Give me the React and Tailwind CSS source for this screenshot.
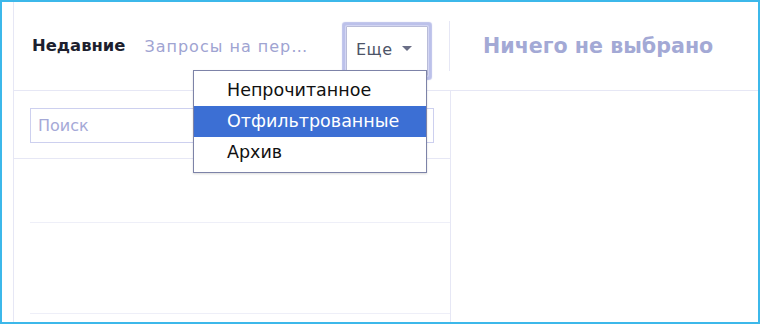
import { useState } from 'react';

const ITEMS = ['Непрочитанное', 'Отфильтрованные', 'Архив'];

export default function App() {
  const [active, setActive] = useState(1);

  return (
    <div className="w-[760px] h-[324px] border-2 border-[#3cb8ea] bg-white flex flex-col overflow-hidden font-['DejaVu_Sans',sans-serif]">
      <div className="flex-1 ml-[11px] border-l border-[#e6e7f5] flex flex-col">
        {/* Header */}
        <div className="h-[89px] border-b border-[#e6e7f5] flex items-center">
          <div className="w-[435px] self-stretch flex items-start pt-[24px] pl-[18px]">
            <div className="h-[41px] flex items-center">
              <span className="text-[16.4px] font-bold text-[#1d1f2e]">Недавние</span>
              <span className="ml-[19px] text-[16px] tracking-[1px] text-[#9fa4d2]">Запросы на пер…</span>
            </div>
            <div className="relative ml-auto mr-[21px]">
              <button className="h-[50px] w-[82px] border border-[#b9bcd8] bg-white rounded-[1px] shadow-[0_0_0_1px_#d3d6f3,0_0_1px_4px_#bcc1ea] flex items-start pt-[11px] pl-[9px] gap-[9px]">
                <span className="text-[16px] tracking-[0.5px] text-[#4d5468]">Еще</span>
                <svg width="10" height="6" viewBox="0 0 10 6" className="mt-[8px]">
                  <path d="M0 0 L10 0 L5 5 Z" fill="#6a6e86" />
                </svg>
              </button>
              <div className="absolute right-[1px] top-[44px] w-[234px] border border-[#7d83a8] bg-white py-[4px] shadow-[0_1px_2px_rgba(0,0,0,0.15)]">
                {ITEMS.map((it, i) => (
                  <div
                    key={it}
                    onMouseEnter={() => setActive(i)}
                    className={`h-[31px] flex items-center pl-[33px] text-[17.5px] ${
                      active === i ? 'bg-[#3c6fd4] text-white' : 'text-[#111111]'
                    }`}
                  >
                    {it}
                  </div>
                ))}
              </div>
            </div>
          </div>
          <div className="w-px h-[50px] bg-[#e6e7f5]" />
          <div className="flex-1 pl-[33px]">
            <span className="text-[20.6px] font-bold text-[#a3a9d5]">Ничего не выбрано</span>
          </div>
        </div>

        {/* Body */}
        <div className="flex-1 flex">
          <div className="w-[437px] border-r border-[#e6e7f5] flex flex-col">
            <div className="h-[68px] border-b border-[#e6e7f5] pt-[17px] pl-[16px]">
              <input
                placeholder="Поиск"
                className="w-[404px] h-[35px] border border-[#cdd0ef] px-[7px] text-[16px] text-[#333] placeholder-[#a5a9d7] outline-none"
              />
            </div>
            <div className="h-[64px] ml-[16px] border-b border-[#eeeff8]" />
            <div className="h-[91px] ml-[16px] border-b border-[#eeeff8]" />
          </div>
          <div className="flex-1" />
        </div>
      </div>
    </div>
  );
}
